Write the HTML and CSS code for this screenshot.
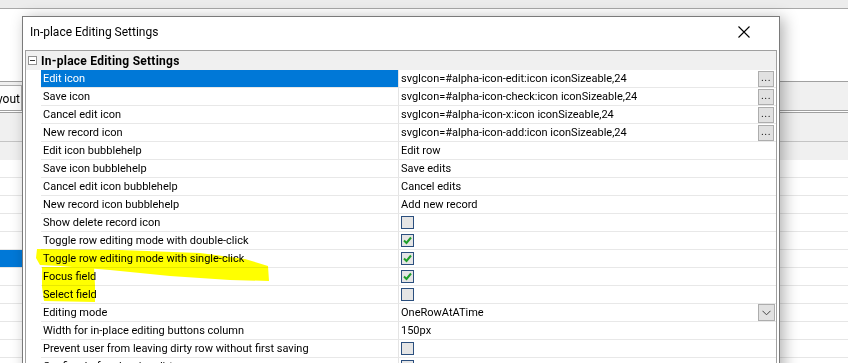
FILE: index.html
```html
<!DOCTYPE html>
<html lang="en">
<head>
    <meta charset="UTF-8">
    <meta name="viewport" content="width=device-width, initial-scale=1.0">
    <title>In-place Editing Settings</title>
    <link rel="stylesheet" href="styles.css">
</head>
<body>
    <!-- application behind the dialog -->
    <div class="app">
        <div class="app-top"></div>
        <div class="app-space"></div>
        <div class="app-toolbar">
            <div class="tool-group"><span class="tool-btn">Layout</span></div>
        </div>
        <div class="app-head"></div>
        <div class="app-subhead"></div>
        <div class="app-rows">
            <div class="app-row"></div>
            <div class="app-row"></div>
            <div class="app-row"></div>
            <div class="app-row"></div>
            <div class="app-row"></div>
            <div class="app-row selected"><span class="app-cell"></span></div>
            <div class="app-row"></div>
            <div class="app-row"></div>
            <div class="app-row"></div>
            <div class="app-row"></div>
            <div class="app-row"></div>
        </div>
    </div>

    <div class="dialog">
        <div class="dialog-title">
            <span>In-place Editing Settings</span>
            <svg class="close-x" width="14" height="14" viewBox="0 0 14 14">
                <path d="M1.5 1.5 L12.5 12.5 M12.5 1.5 L1.5 12.5" stroke="#000" stroke-width="1.1" fill="none"/>
            </svg>
        </div>

        <div class="grid">
            <div class="grid-head">
                <span class="collapse-box"></span>
                <span class="grid-head-text">In-place Editing Settings</span>
            </div>

            <div class="prop">
                <span class="gutter"></span>
                <span class="name selected">Edit icon</span>
                <span class="value">svgIcon=#alpha-icon-edit:icon iconSizeable,24<span class="dots-btn">...</span></span>
            </div>
            <div class="prop">
                <span class="gutter"></span>
                <span class="name">Save icon</span>
                <span class="value">svgIcon=#alpha-icon-check:icon iconSizeable,24<span class="dots-btn">...</span></span>
            </div>
            <div class="prop">
                <span class="gutter"></span>
                <span class="name">Cancel edit icon</span>
                <span class="value">svgIcon=#alpha-icon-x:icon iconSizeable,24<span class="dots-btn">...</span></span>
            </div>
            <div class="prop">
                <span class="gutter"></span>
                <span class="name">New record icon</span>
                <span class="value">svgIcon=#alpha-icon-add:icon iconSizeable,24<span class="dots-btn">...</span></span>
            </div>
            <div class="prop">
                <span class="gutter"></span>
                <span class="name">Edit icon bubblehelp</span>
                <span class="value">Edit row</span>
            </div>
            <div class="prop">
                <span class="gutter"></span>
                <span class="name">Save icon bubblehelp</span>
                <span class="value">Save edits</span>
            </div>
            <div class="prop">
                <span class="gutter"></span>
                <span class="name">Cancel edit icon bubblehelp</span>
                <span class="value">Cancel edits</span>
            </div>
            <div class="prop">
                <span class="gutter"></span>
                <span class="name">New record icon bubblehelp</span>
                <span class="value">Add new record</span>
            </div>
            <div class="prop">
                <span class="gutter"></span>
                <span class="name">Show delete record icon</span>
                <span class="value"><span class="check"></span></span>
            </div>
            <div class="prop">
                <span class="gutter"></span>
                <span class="name">Toggle row editing mode with double-click</span>
                <span class="value"><span class="check on"><svg width="11" height="11" viewBox="0 0 11 11"><path d="M2 5.5 L4.5 8 L9 2.5" stroke="#1e9e2a" stroke-width="2" fill="none"/></svg></span></span>
            </div>
            <div class="prop">
                <span class="gutter"></span>
                <span class="name">Toggle row editing mode with single-click</span>
                <span class="value"><span class="check on"><svg width="11" height="11" viewBox="0 0 11 11"><path d="M2 5.5 L4.5 8 L9 2.5" stroke="#1e9e2a" stroke-width="2" fill="none"/></svg></span></span>
            </div>
            <div class="prop">
                <span class="gutter"></span>
                <span class="name">Focus field</span>
                <span class="value"><span class="check on"><svg width="11" height="11" viewBox="0 0 11 11"><path d="M2 5.5 L4.5 8 L9 2.5" stroke="#1e9e2a" stroke-width="2" fill="none"/></svg></span></span>
            </div>
            <div class="prop">
                <span class="gutter"></span>
                <span class="name">Select field</span>
                <span class="value"><span class="check"></span></span>
            </div>
            <div class="prop">
                <span class="gutter"></span>
                <span class="name">Editing mode</span>
                <span class="value">OneRowAtATime<span class="drop-btn"><svg width="9" height="6" viewBox="0 0 9 6"><path d="M0.5 0.8 L4.5 4.8 L8.5 0.8" stroke="#444" stroke-width="1" fill="none"/></svg></span></span>
            </div>
            <div class="prop">
                <span class="gutter"></span>
                <span class="name">Width for in-place editing buttons column</span>
                <span class="value">150px</span>
            </div>
            <div class="prop">
                <span class="gutter"></span>
                <span class="name">Prevent user from leaving dirty row without first saving</span>
                <span class="value"><span class="check"></span></span>
            </div>
            <div class="prop">
                <span class="gutter"></span>
                <span class="name">Confirm before leaving dirty row</span>
                <span class="value"><span class="check"></span></span>
            </div>
        </div>
    </div>

    <!-- yellow marker strokes drawn over the screenshot -->
    <svg class="marker" width="848" height="363" viewBox="0 0 848 363">
        <polygon points="37,249 120,250 200,253 245,259 268,266 269,281 230,280 170,276 110,270 60,266 40,265 36,258" fill="#ffff00"/>
        <polygon points="42,267 94,267 95,285 95,302 44,301 42,287" fill="#ffff00"/>
    </svg>
</body>
</html>
```

FILE: styles.css
```css
* {
    box-sizing: border-box;
}

body {
    margin: 0;
    width: 848px;
    height: 363px;
    overflow: hidden;
    position: relative;
    background: #fff;
    color: #000;
    font-family: Roboto, "Liberation Sans", sans-serif;
    font-size: 12px;
}

/* background application */
.app-top {
    height: 9px;
    background: #ececec;
    border-bottom: 1px solid #a8a8a8;
}

.app-space {
    height: 72px;
}

.app-toolbar {
    height: 30px;
    background: #f0f0f0;
    border-top: 1px solid #a0a0a0;
    border-bottom: 1px solid #a0a0a0;
    display: flex;
    align-items: flex-end;
}

.tool-group {
    width: 22px;
    overflow: hidden;
    display: flex;
    justify-content: flex-end;
}

.tool-btn {
    flex-shrink: 0;
    height: 25px;
    line-height: 26px;
    padding: 0 1px 0 6px;
    background: #fdfdfd;
    border: 1px solid #adadad;
    border-bottom: none;
}

.app-head {
    margin-top: 1px;
    height: 30px;
    background: #f0f0f0;
    border-top: 1px solid #a0a0a0;
    border-bottom: 1px solid #c4c4c4;
}

.app-subhead {
    height: 18px;
    background: #f0f0f0;
}

.app-row {
    height: 18px;
    border-bottom: 1px solid #e6e6e6;
}

.app-row.selected .app-cell {
    display: block;
    width: 300px;
    height: 17px;
    background: #0078d7;
}

/* dialog */
.dialog {
    position: absolute;
    left: 22px;
    top: 16px;
    width: 758px;
    height: 420px;
    background: #fff;
    border: 1px solid #7a7a7a;
    box-shadow: 4px 2px 14px rgba(0, 0, 0, 0.3);
}

.dialog-title {
    height: 32px;
    display: flex;
    align-items: center;
    justify-content: space-between;
    padding: 0 28px 2px 7px;
}

.close-x {
    display: block;
    margin-bottom: 1px;
}

.grid {
    margin: 1px 2px 0 2px;
    border: 1px solid #a0a0a0;
    border-bottom: none;
}

.grid-head {
    height: 19px;
    background: #f0f0f0;
    display: flex;
    align-items: center;
    padding-left: 2px;
}

.collapse-box {
    position: relative;
    width: 9px;
    height: 9px;
    border: 1px solid #919191;
    background: #fff;
    margin-right: 4px;
}

.collapse-box::after {
    content: "";
    position: absolute;
    left: 1px;
    top: 3px;
    width: 5px;
    height: 1px;
    background: #333;
}

.grid-head-text {
    font-weight: bold;
    letter-spacing: 0.25px;
}

.prop {
    display: grid;
    grid-template-columns: 15px 357px 1fr;
    height: 18px;
    font-size: 11px;
}

.name,
.value {
    height: 18px;
    line-height: 17px;
    border-bottom: 1px solid #e8e8e8;
    padding-left: 2px;
    white-space: nowrap;
    overflow: hidden;
}

.name.selected {
    background: #0078d7;
    color: #fff;
}

.value {
    border-left: 1px solid #e4e4e4;
    display: flex;
    align-items: center;
    justify-content: space-between;
    padding-right: 2px;
}

.dots-btn {
    width: 16px;
    height: 16px;
    background: #e1e1e1;
    border: 1px solid #adadad;
    font-size: 11px;
    line-height: 12px;
    text-align: center;
    letter-spacing: 0.5px;
    color: #222;
}

.drop-btn {
    width: 17px;
    height: 17px;
    margin-right: -1px;
    background: #e1e1e1;
    border: 1px solid #adadad;
    display: flex;
    align-items: center;
    justify-content: center;
}

.check {
    width: 13px;
    height: 13px;
    border: 1px solid #2b4f7e;
    background: #e5e5e5;
    display: flex;
    align-items: center;
    justify-content: center;
}

.marker {
    position: absolute;
    left: 0;
    top: 0;
    pointer-events: none;
    mix-blend-mode: multiply;
}
```
